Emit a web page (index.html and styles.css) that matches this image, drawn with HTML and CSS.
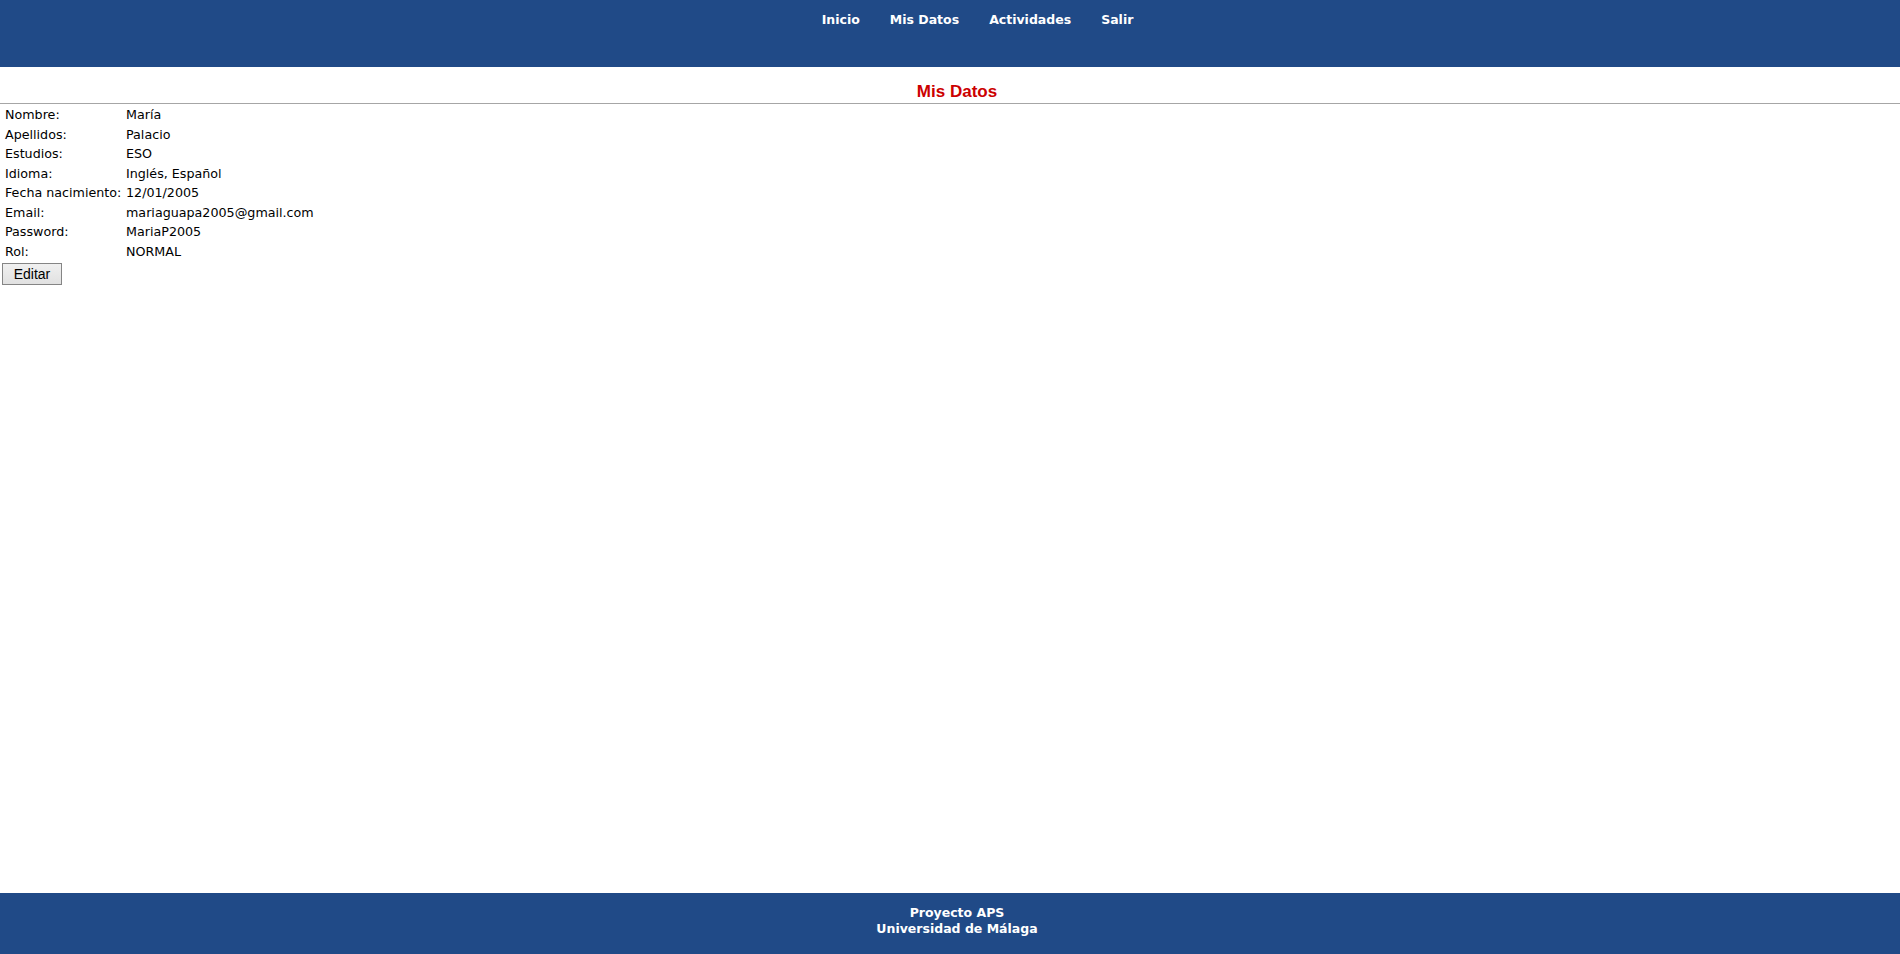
FILE: index.html
```html
<!DOCTYPE html>
<html lang="es">
<head>
<meta charset="utf-8">
<title>Mis Datos</title>
<link rel="stylesheet" href="styles.css">
</head>
<body>
<header class="topbar">
  <nav class="menu">
    <a href="#" class="menu-link">Inicio</a>
    <a href="#" class="menu-link">Mis Datos</a>
    <a href="#" class="menu-link">Actividades</a>
    <a href="#" class="menu-link">Salir</a>
  </nav>
</header>
<main class="content">
  <h2 class="page-title">Mis Datos</h2>
  <table class="data">
    <tr><td class="label">Nombre:</td><td>María</td></tr>
    <tr><td class="label">Apellidos:</td><td>Palacio</td></tr>
    <tr><td class="label">Estudios:</td><td>ESO</td></tr>
    <tr><td class="label">Idioma:</td><td>Inglés, Español</td></tr>
    <tr><td class="label">Fecha nacimiento:</td><td>12/01/2005</td></tr>
    <tr><td class="label">Email:</td><td>mariaguapa2005@gmail.com</td></tr>
    <tr><td class="label">Password:</td><td>MariaP2005</td></tr>
    <tr><td class="label">Rol:</td><td>NORMAL</td></tr>
  </table>
  <button class="btn" type="button">Editar</button>
</main>
<footer class="bottombar">
  <div class="foot-line">Proyecto APS</div>
  <div class="foot-line">Universidad de Málaga</div>
</footer>
</body>
</html>
```
FILE: styles.css
```css
html, body {
  margin: 0;
  padding: 0;
}
body {
  min-height: 100vh;
  display: flex;
  flex-direction: column;
  font-family: "DejaVu Sans", Verdana, sans-serif;
  font-size: 12.7px;
  color: #000;
  background: #fff;
}
.topbar {
  height: 67px;
  background: #204a87;
  box-sizing: border-box;
}
.menu {
  display: flex;
  justify-content: center;
  gap: 30px;
  padding: 12px 0 0 55px;
}
.menu-link {
  color: #fff;
  font-weight: bold;
  font-size: 12.5px;
  line-height: 16px;
  text-decoration: none;
}
.content {
  flex: 1;
}
.page-title {
  margin: 0;
  padding: 15px 0 1px 14px;
  text-align: center;
  font-family: "Liberation Sans", Arial, sans-serif;
  font-size: 17px;
  line-height: 20px;
  font-weight: bold;
  color: #cc0000;
  border-bottom: 1px solid #a6a6a6;
}
.data {
  border-collapse: separate;
  border-spacing: 2px;
  margin-left: 2px;
}
.data td {
  padding: 1px;
  line-height: 15.5px;
  vertical-align: top;
  white-space: nowrap;
}
.data .label {
  width: 117px;
}
.btn {
  margin: 1px 0 0 2px;
  width: 60px;
  height: 22px;
  padding: 0;
  font-family: "Liberation Sans", Arial, sans-serif;
  font-size: 14px;
  color: #000;
  background: linear-gradient(#f0f0f0, #e1e1e1);
  border: 1px solid #858585;
  border-radius: 0;
}
.bottombar {
  height: 61px;
  box-sizing: border-box;
  background: #204a87;
  padding: 12px 0 0 14px;
  text-align: center;
  color: #fff;
  font-weight: bold;
  font-size: 12.5px;
  line-height: 16px;
}
```
